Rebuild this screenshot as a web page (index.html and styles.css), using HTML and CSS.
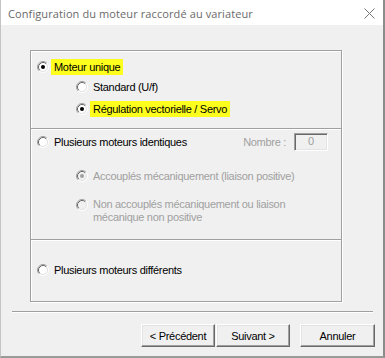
FILE: index.html
```html
<!DOCTYPE html>
<html lang="fr">
<head>
    <meta charset="UTF-8">
    <title>Configuration du moteur raccordé au variateur</title>
    <link rel="stylesheet" href="styles.css">
</head>
<body>
    <svg width="0" height="0" class="defs">
        <defs>
            <symbol id="ring" viewBox="0 0 12 12">
                <path d="M2.11 9.89 A5.5 5.5 0 0 1 9.89 2.11" fill="none" stroke="#a0a0a0"/>
                <path d="M9.89 2.11 A5.5 5.5 0 0 1 2.11 9.89" fill="none" stroke="#ffffff"/>
                <path d="M2.82 9.18 A4.5 4.5 0 0 1 9.18 2.82" fill="none" stroke="#696969"/>
                <path d="M9.18 2.82 A4.5 4.5 0 0 1 2.82 9.18" fill="none" stroke="#e3e3e3"/>
            </symbol>
        </defs>
    </svg>

    <div class="window">
        <div class="titlebar">
            <span class="title">Configuration du moteur raccordé au variateur</span>
            <svg class="close" width="11" height="11" viewBox="0 0 11 11">
                <path d="M0.5 0.5 L10.5 10.5 M10.5 0.5 L0.5 10.5" stroke="#777" stroke-width="1"/>
            </svg>
        </div>

        <div class="client">
            <div class="group">
                <div class="section s1">
                    <div class="row">
                        <svg class="radio" viewBox="0 0 12 12"><circle cx="6" cy="6" r="4" fill="#fff"/><use href="#ring"/><circle cx="6" cy="6" r="2" fill="#000"/></svg>
                        <span class="label mark">Moteur unique</span>
                    </div>
                    <div class="row sub r2">
                        <svg class="radio" viewBox="0 0 12 12"><circle cx="6" cy="6" r="4" fill="#fff"/><use href="#ring"/></svg>
                        <span class="label">Standard (U/f)</span>
                    </div>
                    <div class="row sub r3">
                        <svg class="radio" viewBox="0 0 12 12"><circle cx="6" cy="6" r="4" fill="#fff"/><use href="#ring"/><circle cx="6" cy="6" r="2" fill="#000"/></svg>
                        <span class="label mark">Régulation vectorielle / Servo</span>
                    </div>
                </div>

                <div class="section s2">
                    <div class="row head">
                        <svg class="radio" viewBox="0 0 12 12"><circle cx="6" cy="6" r="4" fill="#fff"/><use href="#ring"/></svg>
                        <span class="label">Plusieurs moteurs identiques</span>
                        <span class="nombre">Nombre :</span>
                        <span class="field">0</span>
                    </div>
                    <div class="row sub r4 off">
                        <svg class="radio" viewBox="0 0 12 12"><circle cx="6" cy="6" r="4" fill="#f0f0f0"/><use href="#ring"/><circle cx="6" cy="6" r="2" fill="#a0a0a0"/></svg>
                        <span class="label">Accouplés mécaniquement (liaison positive)</span>
                    </div>
                    <div class="row sub r5 off multi">
                        <svg class="radio" viewBox="0 0 12 12"><circle cx="6" cy="6" r="4" fill="#f0f0f0"/><use href="#ring"/></svg>
                        <span class="label">Non accouplés mécaniquement ou liaison<br>mécanique non positive</span>
                    </div>
                </div>

                <div class="section s3">
                    <div class="row">
                        <svg class="radio" viewBox="0 0 12 12"><circle cx="6" cy="6" r="4" fill="#fff"/><use href="#ring"/></svg>
                        <span class="label">Plusieurs moteurs différents</span>
                    </div>
                </div>
            </div>

            <div class="separator"></div>

            <div class="buttons">
                <button class="btn">&lt; Précédent</button>
                <button class="btn">Suivant &gt;</button>
                <button class="btn cancel">Annuler</button>
            </div>
        </div>
    </div>
</body>
</html>
```

FILE: styles.css
```css
body {
    margin: 0;
    background-color: #f0f0f0;
    font-family: "Liberation Sans", Arial, sans-serif;
    font-size: 11px;
    letter-spacing: -0.3px;
    color: #000;
}
.defs {
    position: absolute;
}
.window {
    width: 385px;
    height: 358px;
    box-sizing: border-box;
    border-left: 1px solid #c4c4c4;
    border-right: 2px solid #8c8c8c;
    border-bottom: 2px solid #9a9a9a;
    background-color: #f0f0f0;
    display: flex;
    flex-direction: column;
}
.titlebar {
    height: 25px;
    background-color: #fff;
    display: flex;
    align-items: center;
    justify-content: space-between;
    padding: 0 8px 0 7px;
}
.title {
    font-family: "Open Sans", "Noto Sans", sans-serif;
    font-size: 11px;
    letter-spacing: 0.1px;
    color: #6a6a6a;
    margin-top: 1px;
}
.close {
    margin-top: 1px;
}
.client {
    flex: 1;
    display: flex;
    flex-direction: column;
}
.group {
    margin: 25px 0 0 29px;
    width: 312px;
    height: 252px;
    box-sizing: border-box;
    border: 1px solid #a0a0a0;
    box-shadow: inset 1px 1px 0 #fff, 1px 1px 0 #fff;
    display: flex;
    flex-direction: column;
}
.section {
    box-sizing: border-box;
    padding-left: 6px;
}
.s1 {
    height: 77px;
    padding-top: 8px;
}
.s2 {
    height: 111px;
    border-top: 1px solid #a0a0a0;
    box-shadow: inset 0 1px 0 #fff;
    padding-top: 3px;
}
.s3 {
    flex: 1;
    border-top: 1px solid #a0a0a0;
    box-shadow: inset 0 1px 0 #fff;
    padding-top: 22px;
}
.row {
    display: flex;
    align-items: center;
    height: 16px;
}
.radio {
    width: 12px;
    height: 12px;
    flex-shrink: 0;
}
.label {
    margin-left: 2px;
    padding: 0 3px;
    line-height: 16px;
    white-space: nowrap;
}
.mark {
    background-color: #ffff1e;
}
.sub {
    padding-left: 39px;
}
.r2 {
    margin-top: 4px;
}
.r3 {
    margin-top: 6px;
}
.head {
    height: 20px;
}
.nombre {
    margin-left: auto;
    color: #a0a0a0;
}
.field {
    width: 34px;
    height: 18px;
    box-sizing: border-box;
    margin: 0 13px 0 8px;
    border-top: 1px solid #a0a0a0;
    border-left: 1px solid #a0a0a0;
    border-right: 1px solid #fff;
    border-bottom: 1px solid #fff;
    box-shadow: inset 1px 1px 0 #696969, inset -1px -1px 0 #e3e3e3;
    color: #a0a0a0;
    text-align: center;
    line-height: 15px;
}
.off .label {
    color: #a0a0a0;
}
.r4 {
    margin-top: 16px;
}
.r5 {
    margin-top: 14px;
}
.multi {
    height: auto;
    align-items: flex-start;
}
.multi .radio {
    margin-top: 1px;
}
.multi .label {
    line-height: 13px;
}
.separator {
    margin: 9px 0 0 11px;
    width: 361px;
    height: 1px;
    background-color: #a0a0a0;
    box-shadow: 0 1px 0 #fff;
}
.buttons {
    display: flex;
    justify-content: flex-end;
    padding-right: 8px;
    margin-top: 12px;
}
.btn {
    width: 74px;
    height: 23px;
    margin-left: 1px;
    padding: 0;
    font-family: "Liberation Sans", Arial, sans-serif;
    font-size: 11px;
    letter-spacing: -0.3px;
    color: #000;
    background-color: #f0f0f0;
    border: 1px solid;
    border-color: #fff #696969 #696969 #fff;
    box-shadow: inset -1px -1px 0 #a0a0a0, inset 1px 1px 0 #e3e3e3;
}
.cancel {
    width: 75px;
    margin-left: 10px;
}
```
